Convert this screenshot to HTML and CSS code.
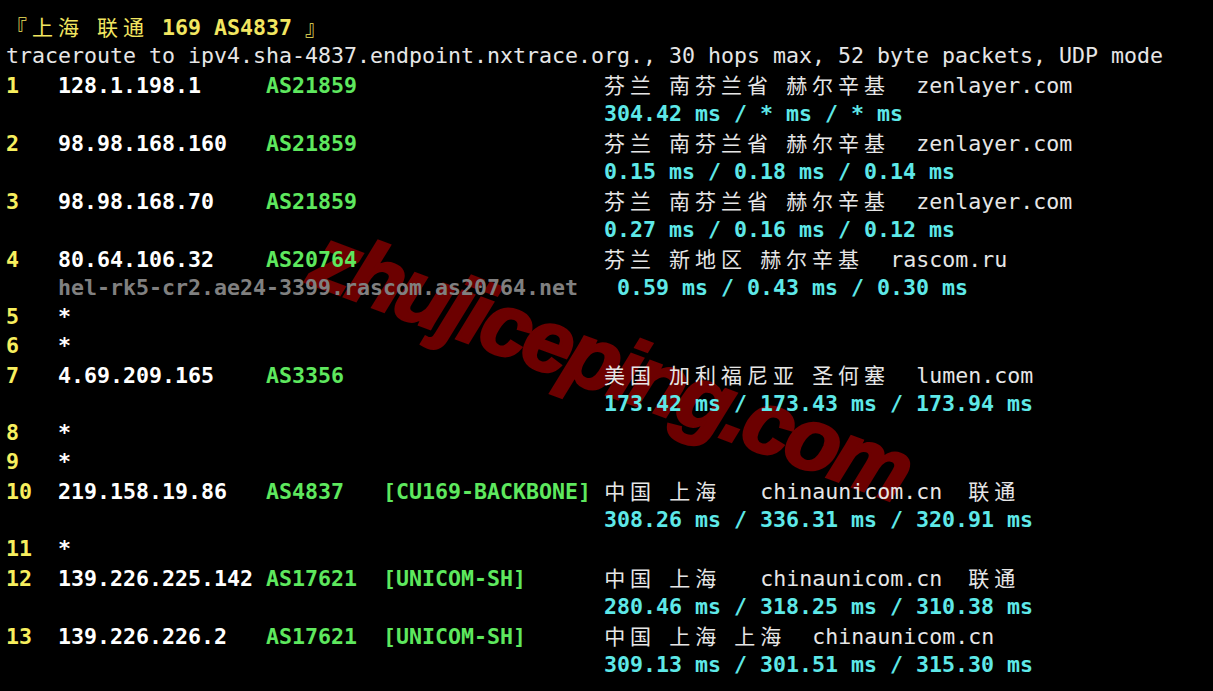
FILE: index.html
```html
<!DOCTYPE html>
<html lang="zh-CN">
<head>
<meta charset="utf-8">
<title>traceroute</title>
<link rel="stylesheet" href="styles.css">
</head>
<body>
<div class="watermark">zhujiceping.com</div>
<main class="term">
<div class="line"><span class="ttl"><span class="cjk">『上海</span> <span class="cjk">联通</span> <b>169 AS4837</b> <span class="cjk">』</span></span></div>
<div class="line">traceroute to ipv4.sha-4837.endpoint.nxtrace.org., 30 hops max, 52 byte packets, UDP mode</div>
<div class="line"><span class="n">1</span>   <span class="ip">128.1.198.1</span>     <span class="as">AS21859</span>                   <span class="cjk">芬兰</span> <span class="cjk">南芬兰省</span> <span class="cjk">赫尔辛基</span>  zenlayer.com</div>
<div class="line">                                              <span class="ms">304.42 ms / * ms / * ms</span></div>
<div class="line"><span class="n">2</span>   <span class="ip">98.98.168.160</span>   <span class="as">AS21859</span>                   <span class="cjk">芬兰</span> <span class="cjk">南芬兰省</span> <span class="cjk">赫尔辛基</span>  zenlayer.com</div>
<div class="line">                                              <span class="ms">0.15 ms / 0.18 ms / 0.14 ms</span></div>
<div class="line"><span class="n">3</span>   <span class="ip">98.98.168.70</span>    <span class="as">AS21859</span>                   <span class="cjk">芬兰</span> <span class="cjk">南芬兰省</span> <span class="cjk">赫尔辛基</span>  zenlayer.com</div>
<div class="line">                                              <span class="ms">0.27 ms / 0.16 ms / 0.12 ms</span></div>
<div class="line"><span class="n">4</span>   <span class="ip">80.64.106.32</span>    <span class="as">AS20764</span>                   <span class="cjk">芬兰</span> <span class="cjk">新地区</span> <span class="cjk">赫尔辛基</span>  rascom.ru</div>
<div class="line">    <span class="host">hel-rk5-cr2.ae24-3399.rascom.as20764.net</span>   <span class="ms">0.59 ms / 0.43 ms / 0.30 ms</span></div>
<div class="line"><span class="n">5</span>   <span class="ip">*</span></div>
<div class="line"><span class="n">6</span>   <span class="ip">*</span></div>
<div class="line"><span class="n">7</span>   <span class="ip">4.69.209.165</span>    <span class="as">AS3356</span>                    <span class="cjk">美国</span> <span class="cjk">加利福尼亚</span> <span class="cjk">圣何塞</span>  lumen.com</div>
<div class="line">                                              <span class="ms">173.42 ms / 173.43 ms / 173.94 ms</span></div>
<div class="line"><span class="n">8</span>   <span class="ip">*</span></div>
<div class="line"><span class="n">9</span>   <span class="ip">*</span></div>
<div class="line"><span class="n">10</span>  <span class="ip">219.158.19.86</span>   <span class="as">AS4837</span>   <span class="as">[CU169-BACKBONE]</span> <span class="cjk">中国</span> <span class="cjk">上海</span>   chinaunicom.cn  <span class="cjk">联通</span></div>
<div class="line">                                              <span class="ms">308.26 ms / 336.31 ms / 320.91 ms</span></div>
<div class="line"><span class="n">11</span>  <span class="ip">*</span></div>
<div class="line"><span class="n">12</span>  <span class="ip">139.226.225.142</span> <span class="as">AS17621</span>  <span class="as">[UNICOM-SH]</span>      <span class="cjk">中国</span> <span class="cjk">上海</span>   chinaunicom.cn  <span class="cjk">联通</span></div>
<div class="line">                                              <span class="ms">280.46 ms / 318.25 ms / 310.38 ms</span></div>
<div class="line"><span class="n">13</span>  <span class="ip">139.226.226.2</span>   <span class="as">AS17621</span>  <span class="as">[UNICOM-SH]</span>      <span class="cjk">中国</span> <span class="cjk">上海</span> <span class="cjk">上海</span>  chinaunicom.cn</div>
<div class="line">                                              <span class="ms">309.13 ms / 301.51 ms / 315.30 ms</span></div>
</main>
</body>
</html>
```
FILE: styles.css
```css
html, body {
  margin: 0;
  padding: 0;
  background: #000;
  height: 100%;
  overflow: hidden;
}

.term {
  position: relative;
  z-index: 1;
  padding: 12px 0 0 6px;
  font-family: "DejaVu Sans Mono", "Liberation Mono", monospace;
  font-size: 21.6px;
  line-height: 29px;
  color: #e6e6e6;
}

.line {
  white-space: pre;
  height: 29px;
}

.cjk {
  font-family: "Noto Sans CJK SC", sans-serif;
  font-size: 21px;
  letter-spacing: 5px;
  font-weight: 400;
}

.ttl {
  color: #f2e660;
}

.ttl b {
  font-weight: 700;
}

.n {
  color: #f7ef5e;
  font-weight: 700;
}

.ip {
  color: #ffffff;
  font-weight: 700;
}

.as {
  color: #5ee85e;
  font-weight: 700;
}

.ms {
  color: #5ee8e8;
  font-weight: 700;
}

.host {
  color: #808080;
  font-weight: 700;
}

.watermark {
  position: absolute;
  left: 316px;
  top: 203px;
  z-index: 0;
  font-family: "Liberation Sans", Arial, sans-serif;
  font-weight: 700;
  font-style: italic;
  font-size: 88px;
  letter-spacing: -4px;
  color: #6c0000;
  -webkit-text-stroke: 3px #6c0000;
  transform: rotate(20.5deg);
  transform-origin: 0 50%;
  white-space: nowrap;
}
```
